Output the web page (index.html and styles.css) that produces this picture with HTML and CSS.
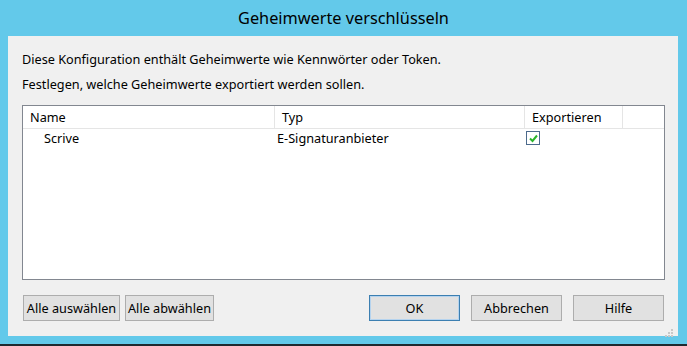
FILE: index.html
```html
<!DOCTYPE html>
<html>
<head>
<meta charset="utf-8">
<link rel="stylesheet" href="styles.css">
</head>
<body>
<div class="window">
  <div class="titlebar">Geheimwerte verschlüsseln</div>
  <div class="panel">
    <p class="line l1">Diese Konfiguration enthält Geheimwerte wie Kennwörter oder Token.</p>
    <p class="line l2">Festlegen, welche Geheimwerte exportiert werden sollen.</p>
    <div class="list">
      <div class="header">
        <div class="hcol c-name">Name</div>
        <div class="hcol c-typ">Typ</div>
        <div class="hcol c-exp">Exportieren</div>
        <div class="hcol c-rest"></div>
      </div>
      <div class="row">
        <div class="cell c-name indent">Scrive</div>
        <div class="cell c-typ">E-Signaturanbieter</div>
        <div class="cell c-exp">
          <span class="checkbox">
            <svg width="11" height="11" viewBox="0 0 11 11"><path d="M2 5.5 L4.5 8 L9 2.5" fill="none" stroke="#2bb52b" stroke-width="2"/></svg>
          </span>
        </div>
      </div>
    </div>
    <div class="buttons">
      <div class="left">
        <button class="btn b-all">Alle auswählen</button>
        <button class="btn b-none">Alle abwählen</button>
      </div>
      <div class="right">
        <button class="btn b-std default">OK</button>
        <button class="btn b-std">Abbrechen</button>
        <button class="btn b-std">Hilfe</button>
      </div>
    </div>
    <div class="grip">
      <svg width="10" height="10" viewBox="0 0 10 10">
        <rect x="7" y="1" width="2" height="2" fill="#c8c8c8"/>
        <rect x="4" y="4" width="2" height="2" fill="#c8c8c8"/>
        <rect x="7" y="4" width="2" height="2" fill="#c8c8c8"/>
        <rect x="1" y="7" width="2" height="2" fill="#c8c8c8"/>
        <rect x="4" y="7" width="2" height="2" fill="#c8c8c8"/>
        <rect x="7" y="7" width="2" height="2" fill="#c8c8c8"/>
      </svg>
    </div>
  </div>
  <div class="bottom-cyan"></div>
  <div class="taskbar"></div>
</div>
</body>
</html>
```
FILE: styles.css
```css
* { box-sizing: border-box; }
html, body { margin: 0; padding: 0; }
body {
  width: 687px;
  height: 346px;
  overflow: hidden;
  background: #63c9ea;
  font-family: "Noto Sans", "Open Sans", sans-serif;
  font-size: 12.7px;
  color: #000;
}
.window { display: flex; flex-direction: column; width: 687px; height: 346px; }
.titlebar {
  height: 36px;
  display: flex;
  align-items: center;
  justify-content: center;
  font-size: 16.3px;
  color: #000;
  padding-bottom: 1px;
}
.panel {
  position: relative;
  margin-left: 8px;
  width: 670px;
  height: 300px;
  background: #f0f0f0;
  padding: 0 0 0 14px;
  display: flex;
  flex-direction: column;
}
.line { margin: 0; height: 16px; line-height: 16px; white-space: nowrap; }
.l1 { margin-top: 15px; }
.l2 { margin-top: 9px; }
.list {
  margin-top: 13px;
  width: 643px;
  height: 175px;
  background: #fff;
  border: 1px solid #828790;
  display: flex;
  flex-direction: column;
}
.header { display: flex; height: 23px; border-bottom: 1px solid #e5e5e5; }
.hcol {
  height: 22px;
  line-height: 22px;
  padding-left: 7px;
  border-right: 1px solid #e5e5e5;
}
.c-name { width: 252px; }
.c-typ { width: 250px; }
.c-exp { width: 98px; }
.hcol.c-rest { flex: 1; border-right: none; }
.row { display: flex; height: 18px; align-items: center; }
.cell { padding-left: 2px; white-space: nowrap; }
.cell.indent { padding-left: 21px; }
.cell.c-exp { padding-left: 1px; display: flex; align-items: center; }
.checkbox {
  width: 14px;
  height: 14px;
  border: 1px solid #4c6a8c;
  background: #fff;
  display: flex;
  align-items: center;
  justify-content: center;
}
.buttons {
  margin-top: 15px;
  display: flex;
  justify-content: space-between;
  width: 642px;
}
.left, .right { display: flex; }
.left { gap: 5px; margin-left: 1px; }
.right { gap: 11px; }
.btn {
  height: 26px;
  font-family: inherit;
  font-size: 12.7px;
  background: #e1e1e1;
  border: 1px solid #adadad;
  color: #000;
  padding: 0;
  margin: 0;
  white-space: nowrap;
}
.b-all { width: 97px; }
.b-none { width: 89px; }
.b-std { width: 91px; }
.btn.default { border-color: #3c7fb1; box-shadow: inset 0 0 0 1px #b5d3ee; }
.grip { position: absolute; right: 4px; bottom: 2px; width: 10px; height: 10px; }
.bottom-cyan { height: 8px; }
.taskbar { height: 2px; background: #1f2a30; }
```
